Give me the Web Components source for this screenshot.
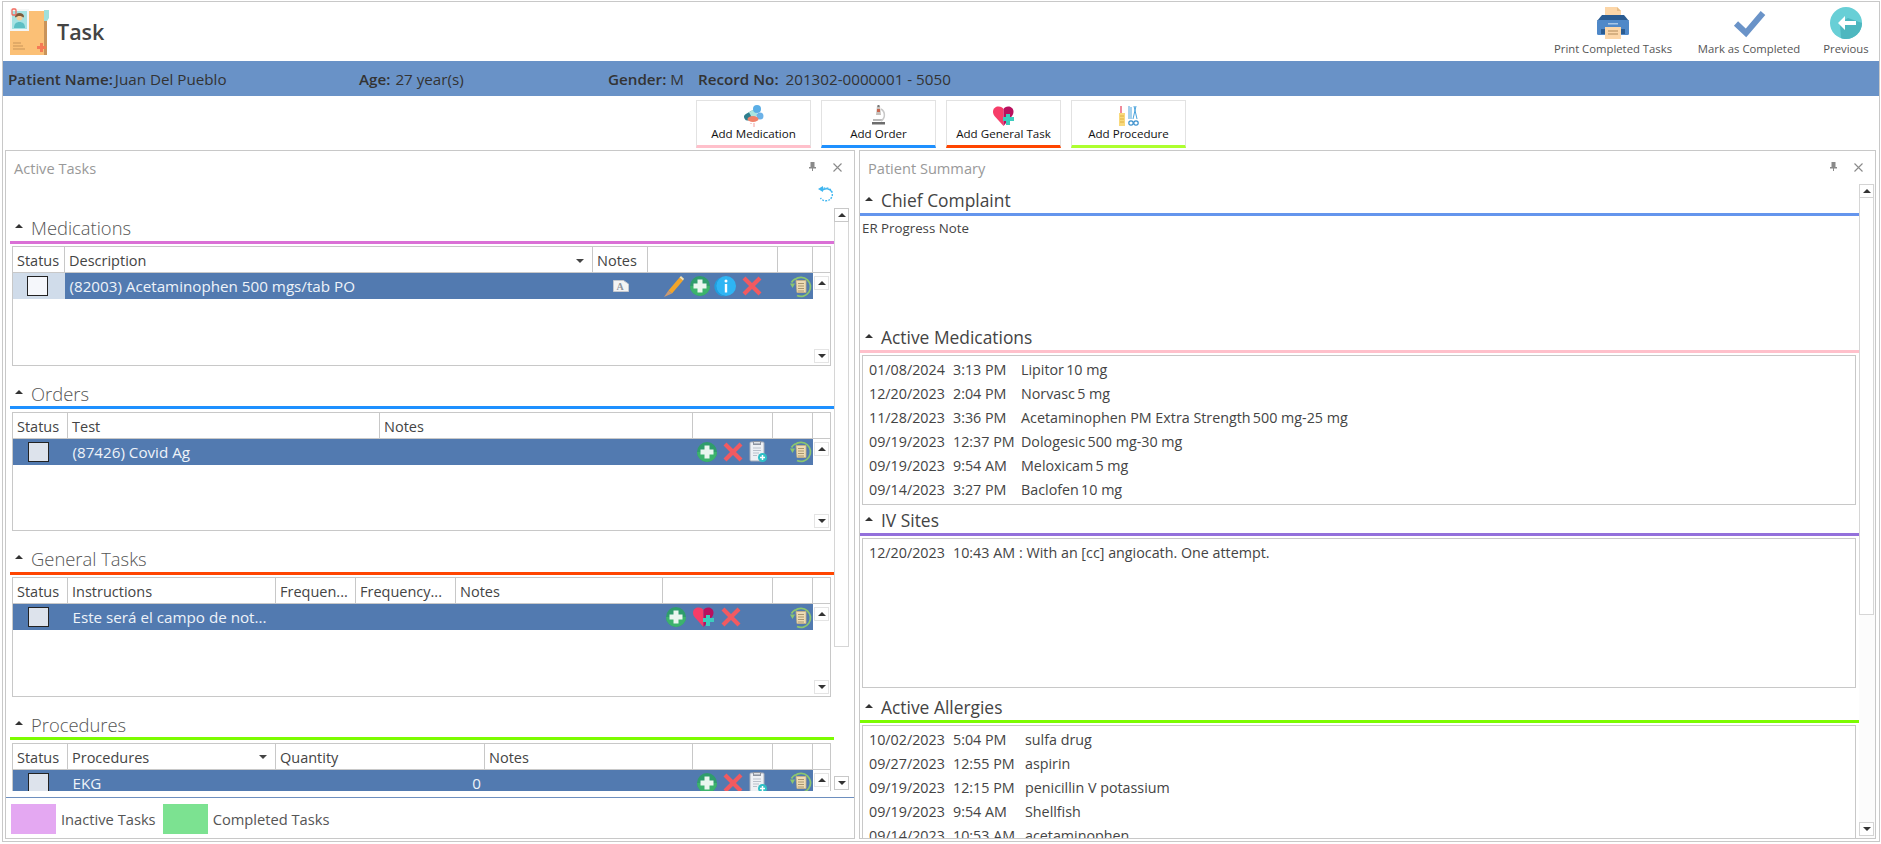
<!DOCTYPE html>
<html>
<head>
<meta charset="utf-8">
<title>Task</title>
<style>
  html, body { margin: 0; padding: 0; background: #fff; overflow: hidden; }
  body { font-family: "Open Sans", "Liberation Sans", sans-serif; color: #444; }
</style>
</head>
<body>
<app-shell>
  <task-header title-text="Task">
    <tool-button slot="tools" icon="printer" label="Print Completed Tasks" w="116"></tool-button>
    <tool-button slot="tools" icon="check" label="Mark as Completed" w="102" style="margin-left:27px"></tool-button>
    <tool-button slot="tools" icon="back" label="Previous" w="44" style="margin-left:24px"></tool-button>
  </task-header>

  <patient-bar>
    <patient-field label="Patient Name:" value="Juan Del Pueblo" w="351" gap="2"></patient-field>
    <patient-field label="Age:" value="27 year(s)" w="249" gap="5"></patient-field>
    <patient-field label="Gender:" value="M" w="90"></patient-field>
    <patient-field label="Record No:" value="201302-0000001 - 5050" gap="7"></patient-field>
  </patient-bar>

  <add-bar>
    <add-button icon="pills" label="Add Medication" color="pink"></add-button>
    <add-button icon="microscope" label="Add Order" color="dodgerblue"></add-button>
    <add-button icon="heart" label="Add General Task" color="orangered"></add-button>
    <add-button icon="tools" label="Add Procedure" color="greenyellow"></add-button>
  </add-bar>

  <dock-row>
    <dock-panel slot="left" title-text="Active Tasks">
      <tasks-view>
        <task-section heading="Medications" color="orchid">
          <task-grid cols="52px 528px 55px 130px 35px">
            <grid-col slot="head">Status</grid-col>
            <grid-col slot="head" sort>Description</grid-col>
            <grid-col slot="head">Notes</grid-col>
            <grid-col slot="head"></grid-col>
            <grid-col slot="head"></grid-col>
            <grid-row slot="row">
              <row-check light></row-check>
              <row-text>(82003) Acetaminophen 500 mgs/tab PO</row-text>
              <row-actions align="center"><ui-icon name="note"></ui-icon></row-actions>
              <row-actions pad="16" gap="6"><ui-icon name="pencil"></ui-icon><ui-icon name="plus"></ui-icon><ui-icon name="info"></ui-icon><ui-icon name="cross"></ui-icon></row-actions>
              <row-actions align="end"><ui-icon name="restore"></ui-icon></row-actions>
            </grid-row>
          </task-grid>
        </task-section>

        <task-section heading="Orders" color="dodgerblue">
          <task-grid cols="55px 312px 313px 80px 40px">
            <grid-col slot="head">Status</grid-col>
            <grid-col slot="head">Test</grid-col>
            <grid-col slot="head">Notes</grid-col>
            <grid-col slot="head"></grid-col>
            <grid-col slot="head"></grid-col>
            <grid-row slot="row">
              <row-check></row-check>
              <row-text>(87426) Covid Ag</row-text>
              <row-text></row-text>
              <row-actions pad="4" gap="6"><ui-icon name="plus"></ui-icon><ui-icon name="cross"></ui-icon><ui-icon name="clip"></ui-icon></row-actions>
              <row-actions align="end"><ui-icon name="restore"></ui-icon></row-actions>
            </grid-row>
          </task-grid>
        </task-section>

        <task-section heading="General Tasks" color="orangered">
          <task-grid cols="55px 208px 80px 100px 207px 110px 40px">
            <grid-col slot="head">Status</grid-col>
            <grid-col slot="head">Instructions</grid-col>
            <grid-col slot="head">Frequen...</grid-col>
            <grid-col slot="head">Frequency...</grid-col>
            <grid-col slot="head">Notes</grid-col>
            <grid-col slot="head"></grid-col>
            <grid-col slot="head"></grid-col>
            <grid-row slot="row">
              <row-check></row-check>
              <row-text>Este será el campo de not...</row-text>
              <row-text></row-text>
              <row-text></row-text>
              <row-text></row-text>
              <row-actions pad="3" gap="7"><ui-icon name="plus"></ui-icon><ui-icon name="heart"></ui-icon><ui-icon name="cross"></ui-icon></row-actions>
              <row-actions align="end"><ui-icon name="restore"></ui-icon></row-actions>
            </grid-row>
          </task-grid>
        </task-section>

        <task-section heading="Procedures" color="lawngreen">
          <task-grid cols="55px 208px 209px 208px 80px 40px">
            <grid-col slot="head">Status</grid-col>
            <grid-col slot="head" sort>Procedures</grid-col>
            <grid-col slot="head">Quantity</grid-col>
            <grid-col slot="head">Notes</grid-col>
            <grid-col slot="head"></grid-col>
            <grid-col slot="head"></grid-col>
            <grid-row slot="row">
              <row-check></row-check>
              <row-text>EKG</row-text>
              <row-text align="end">0</row-text>
              <row-text></row-text>
              <row-actions pad="4" gap="6"><ui-icon name="plus"></ui-icon><ui-icon name="cross"></ui-icon><ui-icon name="clip"></ui-icon></row-actions>
              <row-actions align="end"><ui-icon name="restore"></ui-icon></row-actions>
            </grid-row>
          </task-grid>
        </task-section>
      </tasks-view>
    </dock-panel>

    <dock-panel slot="right" title-text="Patient Summary">
      <summary-view>
        <section-head heading="Chief Complaint" color="cornflowerblue" strong></section-head>
        <plain-note>ER Progress Note</plain-note>

        <section-head heading="Active Medications" color="pink" strong></section-head>
        <summary-list h="150" time-w="68px">
          <summary-row date="01/08/2024" time="3:13 PM" name="Lipitor" dose="10 mg"></summary-row>
          <summary-row date="12/20/2023" time="2:04 PM" name="Norvasc" dose="5 mg"></summary-row>
          <summary-row date="11/28/2023" time="3:36 PM" name="Acetaminophen PM Extra Strength" dose="500 mg-25 mg"></summary-row>
          <summary-row date="09/19/2023" time="12:37 PM" name="Dologesic" dose="500 mg-30 mg"></summary-row>
          <summary-row date="09/19/2023" time="9:54 AM" name="Meloxicam" dose="5 mg"></summary-row>
          <summary-row date="09/14/2023" time="3:27 PM" name="Baclofen" dose="10 mg"></summary-row>
        </summary-list>

        <section-head heading="IV Sites" color="mediumpurple" strong style="margin-top:2px"></section-head>
        <summary-list h="150" time-w="auto">
          <summary-row date="12/20/2023" time="10:43 AM" name=": With an [cc] angiocath. One attempt." time-gap></summary-row>
        </summary-list>

        <section-head heading="Active Allergies" color="lawngreen" strong style="margin-top:6px"></section-head>
        <summary-list h="130" time-w="72px">
          <summary-row date="10/02/2023" time="5:04 PM" name="sulfa drug"></summary-row>
          <summary-row date="09/27/2023" time="12:55 PM" name="aspirin"></summary-row>
          <summary-row date="09/19/2023" time="12:15 PM" name="penicillin V potassium"></summary-row>
          <summary-row date="09/19/2023" time="9:54 AM" name="Shellfish"></summary-row>
          <summary-row date="09/14/2023" time="10:53 AM" name="acetaminophen"></summary-row>
        </summary-list>
      </summary-view>
    </dock-panel>
  </dock-row>
</app-shell>

<script>
// all the pictures of the app, drawn by hand
const ICONS = {
  folder: [40, 46, `
    <rect x="0" y="2" width="37" height="44" fill="#fbc076"/>
    <rect x="34" y="11" width="3" height="35" fill="#c9935a"/>
    <path d="M34 1h5v8l-2 3h-3z" fill="#9fe0dc"/>
    <rect x="0" y="0" width="19" height="22" fill="#f4f6f6"/>
    <rect x="2" y="2" width="15" height="18" fill="#a6e2e2"/>
    <circle cx="9.5" cy="8.5" r="3" fill="#f6cf9c"/>
    <path d="M5 8c0-3 2-4 4.5-4s4.5 1 4.5 4l-1 .5c-1-2-6-2-7 0z" fill="#7c5a3a"/>
    <path d="M4 19c0-4 2-6 5.5-6s5.5 2 5.5 6z" fill="#5dbfc4"/>
    <rect x="2" y="0" width="4" height="6" rx="1" fill="none" stroke="#f26a5e" stroke-width="1.3"/>
    <path d="M3 34h8M3 37h10M3 40h12" stroke="#c99558" stroke-width="1"/>
    <path d="M30 34h3v3h3v3h-3v3h-3v-3h-3v-3h3z" fill="#f57a55"/>`],
  printer: [32, 32, `
    <path d="M8 0h12l4 4v10H8z" fill="#fcd6a8"/>
    <path d="M20 0l4 4h-4z" fill="#e8bd88"/>
    <path d="M5 8h22l5 6H0z" fill="#2b5c92"/>
    <rect x="0" y="13" width="32" height="15" rx="1.5" fill="#4f88c8"/>
    <rect x="4" y="22" width="24" height="5" fill="#2b5c92"/>
    <rect x="11" y="16" width="10" height="1.5" fill="#a8c6e6"/>
    <rect x="8" y="20" width="16" height="12" fill="#fcd6a8"/>
    <path d="M11 24h10M11 27h10" stroke="#b08a5a" stroke-width="1"/>`],
  check: [33, 26, `<path d="M3 13.5L13 23 30 3" fill="none" stroke="#6a93c8" stroke-width="6"/>`],
  back: [32, 32, `
    <circle cx="16" cy="16" r="16" fill="#68cfd6"/>
    <path d="M10 16l8-5 14 5a16 16 0 0 1-16 16c-2 0-4-.4-5-1z" fill="#4bb4bc" opacity=".9"/>
    <path d="M15 9l-7 7 7 7v-5h11v-4H15z" fill="#fff"/>`],
  pills: [20, 22, `
    <g transform="rotate(-30 10 10)">
      <rect x="0" y="5" width="13" height="7" rx="3.5" fill="#2e7f8e"/>
      <rect x="7" y="5" width="6" height="7" fill="#a9e4e0"/>
    </g>
    <circle cx="13" cy="4" r="4" fill="#5aaee6"/>
    <circle cx="16" cy="11" r="3.5" fill="#6cb2e8"/>
    <ellipse cx="9" cy="14" rx="5.5" ry="3" fill="#ef8069"/>
    <path d="M10 18v4M7 18v1" stroke="#f3a0a0" stroke-width="1"/>`],
  microscope: [16, 21, `
    <rect x="1" y="17" width="13" height="2.5" fill="#6d6d6d"/>
    <rect x="2" y="14" width="9" height="2" fill="#b9b9b9"/>
    <path d="M10 4a7 7 0 0 1 0 12" fill="none" stroke="#c8c8c8" stroke-width="1.5"/>
    <path d="M6 1h3l1 9H5z" fill="#c4c0bc"/>
    <rect x="6" y="4" width="3" height="3" fill="#c8664e"/>
    <rect x="6.5" y="0" width="2" height="2" fill="#777"/>`],
  heart: [21, 20, `
    <path d="M10.5 20L1.5 10C-1 7-.5 2 4 .6 7 0 9.5 1 10.5 3z" fill="#f63d68"/>
    <path d="M10.5 20V3C11.5 1 14 0 16.5.6 21 2 21.5 7 19 10z" fill="#b9105e"/>
    <path d="M13 8h4v3h4v4h-4v4h-4v-4H10v-4h3z" fill="#3ccdbd"/>`],
  tools: [20, 20, `
    <rect x="1" y="0" width="2" height="7" fill="#f08a9a"/>
    <rect x="0" y="7" width="6" height="13" fill="#f9d97c"/>
    <path d="M1 10h4M1 13h4M1 16h4" stroke="#e0b040" stroke-width="1"/>
    <path d="M10 0v13M12 1v12M17 0l-3 13M15 0l3 13" stroke="#4aa3dc" stroke-width="1"/>
    <circle cx="12" cy="17" r="2.2" fill="none" stroke="#3a8fcc" stroke-width="1.2"/>
    <circle cx="17" cy="17" r="2.2" fill="none" stroke="#3a8fcc" stroke-width="1.2"/>`],
  plus: [20, 20, `
    <circle cx="10" cy="10" r="10" fill="#2f9d6c"/>
    <path d="M0 10a10 10 0 0 0 20 0z" fill="#3cb36c"/>
    <path d="M7.5 3.5h5v4h4v5h-4v4h-5v-4h-4v-5h4z" fill="#eaf6ef"/>`],
  info: [20, 20, `
    <circle cx="10" cy="10" r="10" fill="#2eb5f4"/>
    <path d="M6 1a10 10 0 0 0 4 19 9 9 0 0 1-4-19z" fill="#1f9fe0"/>
    <circle cx="10" cy="5" r="1.5" fill="#fff"/>
    <rect x="8.8" y="8" width="2.4" height="8.5" fill="#fff"/>`],
  cross: [20, 20, `<path d="M2 2l16 16M18 2L2 18" stroke="#f25a60" stroke-width="4.2" fill="none"/>`],
  pencil: [20, 21, `
    <path d="M4.5 14.5L15.5 1.5l3.5 3L8 17.5z" fill="#f2a52a"/>
    <path d="M15.5 1.5l1.5-1.5 3 2.7-1 1.8z" fill="#f8e3b0"/>
    <path d="M4.5 14.5L8 17.5 0 21z" fill="#c99a72"/>`],
  clip: [18, 21, `
    <rect x="1" y="1" width="14" height="19" rx="1" fill="#eef1f5" stroke="#a7adb8" stroke-width="1"/>
    <rect x="4" y="0" width="8" height="4" fill="#8d94a0"/>
    <rect x="5" y="1" width="6" height="1.5" fill="#dfe3e8"/>
    <path d="M4 7h8M4 9.5h8M4 12h6M4 14.5h4" stroke="#b9c0ca" stroke-width="1"/>
    <circle cx="13.5" cy="16.5" r="4.5" fill="#2ebfc4"/>
    <path d="M13.5 14v5M11 16.5h5" stroke="#fff" stroke-width="1.5"/>`],
  note: [16, 12, `
    <path d="M.5.5h10l5 3.500v7.500H.5z" fill="#f4f4f4" stroke="#c4c8ce" stroke-width="1"/>
    <text x="7" y="10" font-family="Liberation Serif, serif" font-size="10" font-weight="700" text-anchor="middle" fill="#8f949c">A</text>`],
  restore: [21, 21, `
    <path d="M5 3.5A9.5 9.5 0 1 1 7 19.5" fill="none" stroke="#8cc66e" stroke-width="1.8"/>
    <path d="M1.500 6.500A9.5 9.5 0 0 1 5 3" fill="none" stroke="#8cc66e" stroke-width="1.8"/>
    <path d="M0 7.5h5L2.5 12z" fill="#8cc66e"/>
    <path d="M6 4.5h10v12H7z" fill="#efdcb4" stroke="#c9b184" stroke-width=".8"/>
    <path d="M8 7.5h6M8 10h6M8 12.5h6M8 15h6" stroke="#a89670" stroke-width="1"/>`],
  refresh: [16, 16, `
    <path d="M3 4A6.5 6.5 0 1 1 2.500 12" fill="none" stroke="#40b6f0" stroke-width="1.4" stroke-dasharray="1.8 1.2"/>
    <path d="M4 4.5A6.5 6.5 0 0 1 14 6" fill="none" stroke="#40b6f0" stroke-width="1.4"/>
    <path d="M0 3l5-3v6z" fill="#40b6f0"/>`],
  pin: [7, 9, `<path d="M1.5 0h4v5h1.5v1.5H4V9H3V6.5H0V5h1.5z" fill="#8a8a8a"/>`],
  close: [9, 9, `<path d="M.5.5l8 8M8.5.5l-8 8" stroke="#8a8a8a" stroke-width="1.1" fill="none"/>`],
};

class UiIcon extends HTMLElement {
  connectedCallback() {
    const [w, h, body] = ICONS[this.getAttribute('name')];
    this.attachShadow({ mode: 'open' });
    this.shadowRoot.innerHTML = `
      <style>:host { display: inline-flex; flex: none; } svg { display: block; overflow: visible; }</style>
      <svg width="${w}" height="${h}" viewBox="0 0 ${w} ${h}">${body}</svg>`;
  }
}

class AppShell extends HTMLElement {
  constructor() {
    super();
    this.attachShadow({ mode: 'open' });
    this.shadowRoot.innerHTML = `
      <style>
        :host {
          display: flex;
          flex-direction: column;
          box-sizing: border-box;
          width: 1878px;
          height: 841px;
          margin: 1px 0 0 2px;
          border: 1px solid #c8c8c8;
          background: #fff;
        }
      </style>
      <slot></slot>`;
  }
}

class TaskHeader extends HTMLElement {
  connectedCallback() {
    this.attachShadow({ mode: 'open' });
    this.shadowRoot.innerHTML = `
      <style>
        :host { display: flex; align-items: flex-start; height: 59px; flex: none; padding: 7px 11px 0 7px; box-sizing: border-box; }
        h1 { margin: 0 0 0 7px; height: 45px; display: flex; align-items: center; font-size: 21.5px; font-weight: 600; color: #444; }
        .tools { margin-left: auto; display: flex; margin-top: -3px; }
      </style>
      <ui-icon name="folder"></ui-icon>
      <h1>${this.getAttribute('title-text')}</h1>
      <div class="tools"><slot name="tools"></slot></div>`;
  }
}

class ToolButton extends HTMLElement {
  connectedCallback() {
    this.attachShadow({ mode: 'open' });
    this.shadowRoot.innerHTML = `
      <style>
        :host { display: flex; flex-direction: column; align-items: center; width: ${this.getAttribute('w')}px; }
        .pic { height: 33px; display: flex; align-items: center; }
        span { margin-top: 2px; font-size: 11.3px; line-height: 16px; color: #555; white-space: nowrap; }
      </style>
      <div class="pic"><ui-icon name="${this.getAttribute('icon')}"></ui-icon></div>
      <span>${this.getAttribute('label')}</span>`;
  }
}

class PatientBar extends HTMLElement {
  constructor() {
    super();
    this.attachShadow({ mode: 'open' });
    this.shadowRoot.innerHTML = `
      <style>
        :host { display: flex; align-items: center; flex: none; height: 35px; box-sizing: border-box; padding-left: 5px; background: #6992c7; color: #333; }
      </style>
      <slot></slot>`;
  }
}

class PatientField extends HTMLElement {
  connectedCallback() {
    const w = this.getAttribute('w');
    const gap = this.getAttribute('gap') || 4;
    this.attachShadow({ mode: 'open' });
    this.shadowRoot.innerHTML = `
      <style>
        :host { display: block; ${w ? `width: ${w}px;` : ''} flex: none; font-size: 15.2px; white-space: nowrap; }
        b { font-weight: 600; margin-right: ${gap}px; }
      </style>
      <b>${this.getAttribute('label')}</b><span>${this.getAttribute('value')}</span>`;
  }
}

class AddBar extends HTMLElement {
  constructor() {
    super();
    this.attachShadow({ mode: 'open' });
    this.shadowRoot.innerHTML = `
      <style>:host { display: flex; justify-content: center; gap: 10px; flex: none; height: 54px; box-sizing: border-box; padding-top: 4px; }</style>
      <slot></slot>`;
  }
}

class AddButton extends HTMLElement {
  connectedCallback() {
    this.attachShadow({ mode: 'open' });
    this.shadowRoot.innerHTML = `
      <style>
        :host {
          display: flex; flex-direction: column; align-items: center;
          box-sizing: border-box; width: 115px; height: 48px; padding-top: 4px;
          border: 1px solid #e2e2e2; border-bottom: 3px solid ${this.getAttribute('color')};
          background: #fff;
        }
        .pic { height: 21px; display: flex; align-items: center; }
        span { font-size: 11.6px; line-height: 15px; color: #111; white-space: nowrap; }
      </style>
      <div class="pic"><ui-icon name="${this.getAttribute('icon')}"></ui-icon></div>
      <span>${this.getAttribute('label')}</span>`;
  }
}

class DockRow extends HTMLElement {
  constructor() {
    super();
    this.attachShadow({ mode: 'open' });
    this.shadowRoot.innerHTML = `
      <style>
        :host { display: grid; grid-template-columns: 850px 1017px; gap: 4px; flex: 1; min-height: 0; padding: 0 0 2px 2px; }
      </style>
      <slot name="left"></slot><slot name="right"></slot>`;
  }
}

class DockPanel extends HTMLElement {
  connectedCallback() {
    this.attachShadow({ mode: 'open' });
    this.shadowRoot.innerHTML = `
      <style>
        :host { display: flex; flex-direction: column; box-sizing: border-box; border: 1px solid #c8c8c8; min-height: 0; overflow: hidden; }
        .top { display: flex; align-items: center; flex: none; height: 33px; padding: 0 12px 0 8px; }
        .title { font-size: 14.6px; color: #999; margin-right: auto; }
        .pin { margin-right: 17px; margin-top: -2px; }
        .x { margin-top: -1px; }
      </style>
      <div class="top">
        <span class="title">${this.getAttribute('title-text')}</span>
        <ui-icon class="pin" name="pin"></ui-icon>
        <ui-icon class="x" name="close"></ui-icon>
      </div>
      <slot></slot>`;
  }
}

class ScrollRail extends HTMLElement {
  connectedCallback() {
    const thumb = this.getAttribute('thumb');
    const tone = this.getAttribute('tone') || '#e4e4e4';
    this.attachShadow({ mode: 'open' });
    this.shadowRoot.innerHTML = `
      <style>
        :host { display: flex; flex-direction: column; flex: none; width: 15px; box-sizing: border-box; }
        .btn { flex: none; box-sizing: border-box; height: 14px; border: 1px solid ${tone}; background: #fff; display: flex; align-items: center; justify-content: center; }
        .up { width: 0; height: 0; border: 4px solid transparent; border-top: 0; border-bottom: 4px solid #333; }
        .down { width: 0; height: 0; border: 4px solid transparent; border-bottom: 0; border-top: 4px solid #333; }
        .thumb { flex: none; box-sizing: border-box; height: ${thumb}px; border: 1px solid #d6d6d6; border-top: 0; background: #fff; }
        .space { flex: 1; }
      </style>
      <div class="btn"><div class="up"></div></div>
      ${thumb ? '<div class="thumb"></div>' : ''}
      <div class="space"></div>
      <div class="btn"><div class="down"></div></div>`;
  }
}

class TasksView extends HTMLElement {
  constructor() {
    super();
    this.attachShadow({ mode: 'open' });
    this.shadowRoot.innerHTML = `
      <style>
        :host { display: flex; flex-direction: column; flex: 1; min-height: 0; }
        .refresh { flex: none; height: 24px; box-sizing: border-box; padding: 1px 0 0 812px; }
        .main { display: flex; flex: none; height: 583px; padding-left: 4px; }
        .list { flex: none; width: 824px; height: 583px; overflow: hidden; }
        scroll-rail { margin-bottom: 1px; }
        footer {
          flex: 1; margin-top: 6px; border-top: 1px solid #6d8fbf;
          display: flex; align-items: flex-start; padding: 6px 0 0 5px;
          font-size: 14.7px; line-height: 30px; color: #555;
        }
        .sw { width: 45px; height: 30px; margin-right: 5px; }
        .sw2 { margin-left: 7px; }
      </style>
      <div class="refresh"><ui-icon name="refresh"></ui-icon></div>
      <div class="main">
        <div class="list"><slot></slot></div>
        <scroll-rail thumb="425" tone="#c8c8c8"></scroll-rail>
      </div>
      <footer>
        <div class="sw" style="background:#e4a8f2"></div><span>Inactive Tasks</span>
        <div class="sw sw2" style="background:#7ce291"></div><span>Completed Tasks</span>
      </footer>`;
  }
}

class TaskSection extends HTMLElement {
  connectedCallback() {
    this.attachShadow({ mode: 'open' });
    this.shadowRoot.innerHTML = `
      <style>
        :host { display: block; height: 165.6px; padding-top: 6.5px; box-sizing: border-box; }
        section-head { margin-bottom: 2.5px; }
      </style>
      <section-head heading="${this.getAttribute('heading')}" color="${this.getAttribute('color')}"></section-head>
      <slot></slot>`;
  }
}

class SectionHead extends HTMLElement {
  connectedCallback() {
    const strong = this.hasAttribute('strong');
    this.attachShadow({ mode: 'open' });
    this.shadowRoot.innerHTML = `
      <style>
        :host { display: flex; align-items: center; box-sizing: border-box; height: 29px; flex: none; padding-left: 5px; border-bottom: 3px solid ${this.getAttribute('color')}; }
        i { width: 0; height: 0; border: 4px solid transparent; border-top: 0; border-bottom: 4px solid #333; margin-right: 8px; margin-top: -3px; }
        span { font-size: ${strong ? '17.4px' : '18.4px'}; font-weight: ${strong ? 400 : 300}; color: ${strong ? '#444' : '#555'}; }
      </style>
      <i></i><span>${this.getAttribute('heading')}</span>`;
  }
}

class TaskGrid extends HTMLElement {
  connectedCallback() {
    this.style.setProperty('--cols', this.getAttribute('cols'));
    this.attachShadow({ mode: 'open' });
    this.shadowRoot.innerHTML = `
      <style>
        :host { display: block; box-sizing: border-box; width: 819px; height: 119.5px; margin-left: 2px; border: 1px solid #c8c8c8; }
        .head { display: grid; grid-template-columns: var(--cols) 1fr; height: 26px; border-bottom: 1px solid #c8c8c8; box-sizing: border-box; }
        .body { display: flex; height: 91.5px; }
        .rows { width: 800px; flex: none; }
        scroll-rail { margin: 3px 0 2px 1px; }
      </style>
      <div class="head"><slot name="head"></slot></div>
      <div class="body">
        <div class="rows"><slot name="row"></slot></div>
        <scroll-rail></scroll-rail>
      </div>`;
  }
}

class GridCol extends HTMLElement {
  connectedCallback() {
    const sort = this.hasAttribute('sort');
    this.attachShadow({ mode: 'open' });
    this.shadowRoot.innerHTML = `
      <style>
        :host { display: flex; align-items: center; box-sizing: border-box; padding: 2px 0 0 4px; border-right: 1px solid #c8c8c8; font-size: 14.5px; color: #444; white-space: nowrap; overflow: hidden; }
        i { margin-left: auto; margin-right: 8px; width: 0; height: 0; border: 4px solid transparent; border-bottom: 0; border-top: 4px solid #444; }
      </style>
      <slot></slot>${sort ? '<i></i>' : ''}`;
  }
}

class GridRow extends HTMLElement {
  constructor() {
    super();
    this.attachShadow({ mode: 'open' });
    this.shadowRoot.innerHTML = `
      <style>
        :host { display: grid; grid-template-columns: var(--cols); height: 26px; background: #527ab0; }
      </style>
      <slot></slot>`;
  }
}

class RowCheck extends HTMLElement {
  connectedCallback() {
    const light = this.hasAttribute('light');
    this.attachShadow({ mode: 'open' });
    this.shadowRoot.innerHTML = `
      <style>
        :host { display: flex; align-items: center; justify-content: center; padding-right: 4px; ${light ? 'background: #d0dcea;' : ''} }
        div { box-sizing: border-box; width: 21px; height: 20px; border: 1px solid #222; background: ${light ? '#f5f7fb' : '#dde3ec'}; }
      </style>
      <div></div>`;
  }
}

class RowText extends HTMLElement {
  connectedCallback() {
    const end = this.getAttribute('align') === 'end';
    this.attachShadow({ mode: 'open' });
    this.shadowRoot.innerHTML = `
      <style>
        :host { display: flex; align-items: center; justify-content: ${end ? 'flex-end' : 'flex-start'}; min-width: 0; padding: 0 ${end ? '4px' : '0'} 0 4.5px; font-size: 15.2px; color: #eef3f9; white-space: nowrap; }
      </style>
      <slot></slot>`;
  }
}

class RowActions extends HTMLElement {
  connectedCallback() {
    const align = this.getAttribute('align');
    const justify = align === 'end' ? 'flex-end' : align === 'center' ? 'center' : 'flex-start';
    this.attachShadow({ mode: 'open' });
    this.shadowRoot.innerHTML = `
      <style>
        :host { display: flex; align-items: center; justify-content: ${justify}; gap: ${this.getAttribute('gap') || 0}px; padding: 0 ${align === 'end' ? 2 : 0}px 0 ${this.getAttribute('pad') || 0}px; min-width: 0; }
      </style>
      <slot></slot>`;
  }
}

class SummaryView extends HTMLElement {
  constructor() {
    super();
    this.attachShadow({ mode: 'open' });
    this.shadowRoot.innerHTML = `
      <style>
        :host { display: flex; flex: 1; min-height: 0; background: #fcfcfc; }
        .col { width: 999px; flex: none; display: flex; flex-direction: column; overflow: hidden; background: #fff; padding-top: 3px; }
        scroll-rail { height: 652px; }
      </style>
      <div class="col"><slot></slot></div>
      <scroll-rail thumb="417" tone="#d4d4d4"></scroll-rail>`;
  }
}

class PlainNote extends HTMLElement {
  constructor() {
    super();
    this.attachShadow({ mode: 'open' });
    this.shadowRoot.innerHTML = `
      <style>
        :host { display: block; flex: none; height: 108px; box-sizing: border-box; padding: 3px 0 0 2px; font-size: 13.3px; line-height: 18px; color: #444; }
      </style>
      <slot></slot>`;
  }
}

class SummaryList extends HTMLElement {
  connectedCallback() {
    this.style.setProperty('--time-w', this.getAttribute('time-w'));
    this.attachShadow({ mode: 'open' });
    this.shadowRoot.innerHTML = `
      <style>
        :host { display: block; flex: none; box-sizing: border-box; height: ${this.getAttribute('h')}px; width: 994px; margin: 2px 0 0 2px; border: 1px solid #c8c8c8; padding: 1px 0 0 6px; overflow: hidden; }
      </style>
      <slot></slot>`;
  }
}

class SummaryRow extends HTMLElement {
  connectedCallback() {
    const dose = this.getAttribute('dose');
    this.attachShadow({ mode: 'open' });
    this.shadowRoot.innerHTML = `
      <style>
        :host { display: grid; grid-template-columns: 84px var(--time-w) 1fr; height: 24px; align-items: center; font-size: 14.3px; color: #444; white-space: nowrap; }
        .sep { letter-spacing: -1.5px; }
        .gap { padding-left: 4px; }
      </style>
      <span>${this.getAttribute('date')}</span>
      <span>${this.getAttribute('time')}</span>
      <span class="${this.hasAttribute('time-gap') ? 'gap' : ''}">${this.getAttribute('name')}${dose ? `<span class="sep"> </span>${dose}` : ''}</span>`;
  }
}

customElements.define('ui-icon', UiIcon);
customElements.define('app-shell', AppShell);
customElements.define('task-header', TaskHeader);
customElements.define('tool-button', ToolButton);
customElements.define('patient-bar', PatientBar);
customElements.define('patient-field', PatientField);
customElements.define('add-bar', AddBar);
customElements.define('add-button', AddButton);
customElements.define('dock-row', DockRow);
customElements.define('dock-panel', DockPanel);
customElements.define('scroll-rail', ScrollRail);
customElements.define('tasks-view', TasksView);
customElements.define('task-section', TaskSection);
customElements.define('section-head', SectionHead);
customElements.define('task-grid', TaskGrid);
customElements.define('grid-col', GridCol);
customElements.define('grid-row', GridRow);
customElements.define('row-check', RowCheck);
customElements.define('row-text', RowText);
customElements.define('row-actions', RowActions);
customElements.define('summary-view', SummaryView);
customElements.define('plain-note', PlainNote);
customElements.define('summary-list', SummaryList);
customElements.define('summary-row', SummaryRow);
</script>
</body>
</html>
